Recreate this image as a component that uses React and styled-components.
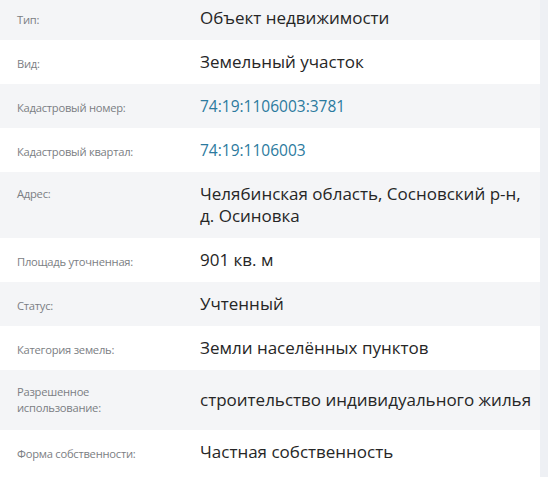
import styled, { createGlobalStyle } from "styled-components";

const GlobalStyle = createGlobalStyle`
  html, body {
    margin: 0;
    padding: 0;
    background: #fff;
    overflow: hidden;
  }
  body {
    font-family: "Open Sans", "Noto Sans", sans-serif;
  }
`;

const rows = [
  { label: "Тип:", value: "Объект недвижимости" },
  { label: "Вид:", value: "Земельный участок" },
  { label: "Кадастровый номер:", value: "74:19:1106003:3781", link: true },
  { label: "Кадастровый квартал:", value: "74:19:1106003", link: true },
  {
    label: "Адрес:",
    value: "Челябинская область, Сосновский р-н, д. Осиновка",
    top: true,
  },
  { label: "Площадь уточненная:", value: "901 кв. м" },
  { label: "Статус:", value: "Учтенный" },
  { label: "Категория земель:", value: "Земли населённых пунктов" },
  {
    label: "Разрешенное использование:",
    value: "строительство индивидуального жилья",
    tall: true,
  },
  { label: "Форма собственности:", value: "Частная собственность" },
];

export default function App() {
  return (
    <>
      <GlobalStyle />
      <Page>
        <Table>
          {rows.map((row, i) => (
            <Row
              key={row.label}
              $striped={i % 2 === 0}
              $top={row.top}
              $tall={row.tall}
            >
              <Label $tall={row.tall}>{row.label}</Label>
              <Value>
                {row.link ? <Link href="#">{row.value}</Link> : row.value}
              </Value>
            </Row>
          ))}
        </Table>
        <Scroll />
      </Page>
    </>
  );
}

const Page = styled.div`
  display: flex;
  width: 548px;
  height: 477px;
  overflow: hidden;
`;

const Table = styled.div`
  flex: 1;
  display: flex;
  flex-direction: column;
  margin-top: -4px;
`;

const Row = styled.div`
  display: grid;
  grid-template-columns: 183px 1fr;
  align-items: ${(p) => (p.$top ? "start" : "center")};
  padding: ${(p) => (p.$tall ? "14px 0 14px 17px" : "11px 0 11px 17px")};
  min-height: 22px;
  background: ${(p) => (p.$striped ? "#f4f5f7" : "#ffffff")};
`;

const Label = styled.div`
  font-size: 11.2px;
  letter-spacing: -0.25px;
  line-height: 16px;
  color: #7b7e83;
  padding-top: ${(p) => (p.$tall ? "0" : "3px")};
  max-width: ${(p) => (p.$tall ? "110px" : "none")};
`;

const Value = styled.div`
  font-size: 17px;
  line-height: 22px;
  color: #262626;
  padding-right: 8px;
`;

const Link = styled.a`
  font-size: 15.5px;
  color: #2b7a9e;
  text-decoration: none;
`;

const Scroll = styled.div`
  width: 8px;
  background: #eef0f4;
`;
